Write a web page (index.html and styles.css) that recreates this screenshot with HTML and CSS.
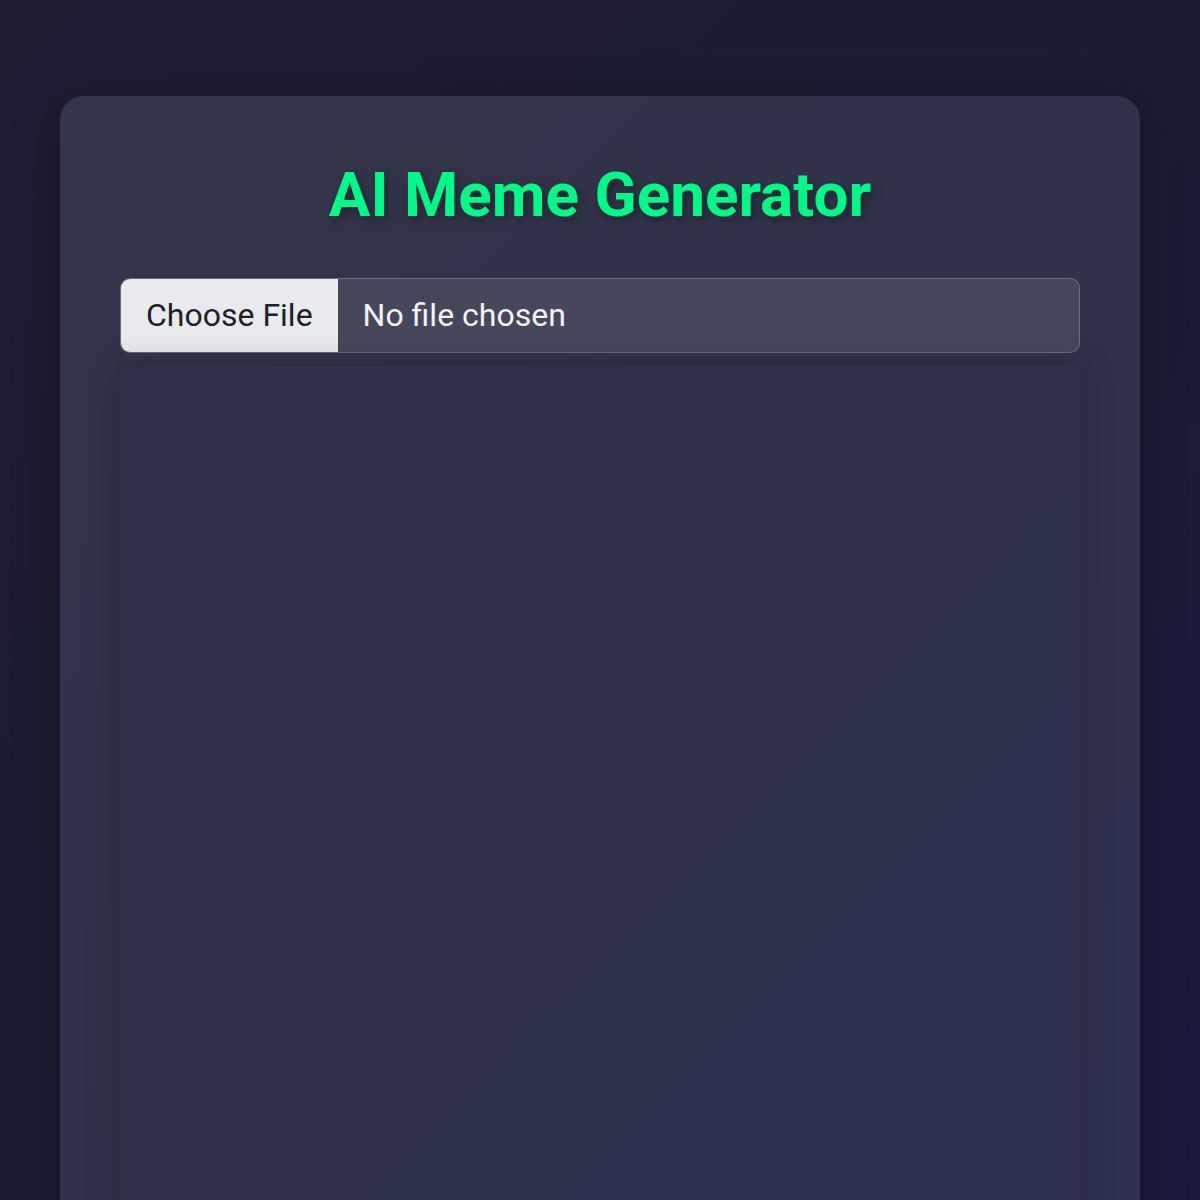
FILE: index.html
```html
<!DOCTYPE html>
<html lang="en">
<head>
<meta charset="utf-8">
<title>AI Meme Generator</title>
<link rel="stylesheet" href="styles.css">
</head>
<body>
  <main class="card">
    <h1 class="title">AI Meme Generator</h1>
    <input class="file-input" type="file" accept="image/*">
    <div class="canvas-area"></div>
  </main>
</body>
</html>
```

FILE: styles.css
```css
html, body {
  margin: 0;
  height: 100%;
}

body {
  background: linear-gradient(135deg, #1f1c30 0%, #1a1b2f 45%, #191a3a 100%);
  font-family: Roboto, "Noto Sans", "Liberation Sans", sans-serif;
  padding: 96px 60px 0;
  box-sizing: border-box;
  overflow: hidden;
}

.card {
  background: linear-gradient(135deg, #34344a 0%, #30324a 50%, #2f3350 100%);
  border-radius: 24px;
  padding: 60px 60px 60px;
  box-shadow: 0 8px 48px rgba(0, 0, 0, 0.25);
  min-height: 1400px;
  display: flex;
  flex-direction: column;
}

.title {
  margin: 0 0 47px;
  padding-top: 2px;
  text-align: center;
  font-size: 62px;
  font-weight: 700;
  color: #00f987;
  text-shadow: 3px 4px 8px rgba(0, 0, 0, 0.35);
  line-height: normal;
}

.file-input {
  display: block;
  box-sizing: border-box;
  width: 100%;
  margin: 0;
  padding: 0;
  font-family: Roboto, "Noto Sans", "Liberation Sans", sans-serif;
  font-size: 32px;
  color: #f2f2f5;
  background: #46475c;
  border: 1px solid rgba(255, 255, 255, 0.2);
  border-radius: 10px;
  overflow: hidden;
}

.file-input::file-selector-button {
  font-family: Roboto, "Noto Sans", "Liberation Sans", sans-serif;
  font-size: 32px;
  color: #202124;
  background: #e9eaed;
  border: none;
  margin: 0 25px 0 0;
  padding: 17px 25px 18px;
}

.canvas-area {
  margin-top: 13px;
  height: 1000px;
  background: linear-gradient(135deg, #30324a 0%, #2f3249 40%, #2f3350 100%);
  box-shadow: 0 0 32px rgba(0, 0, 0, 0.22);
}
```
